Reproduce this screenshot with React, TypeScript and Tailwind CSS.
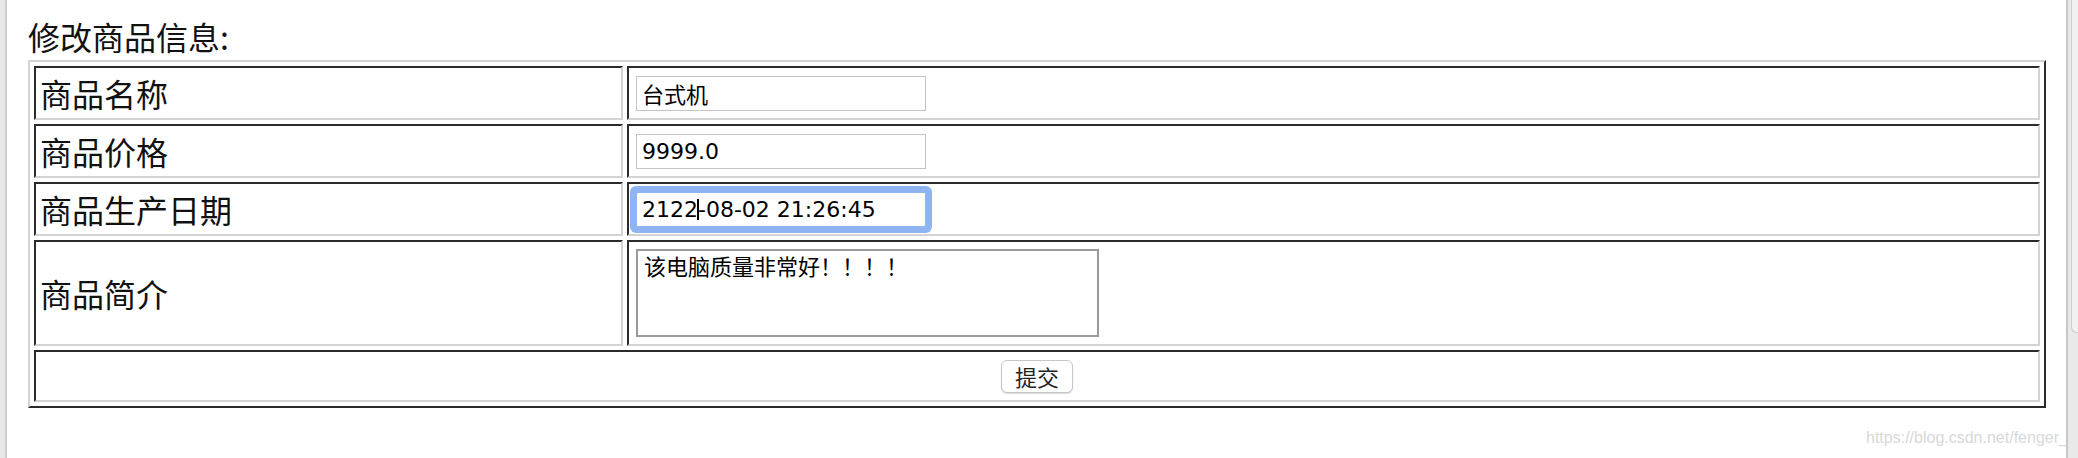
import React from "react";

const cjk = { fontFamily: '"Noto Sans CJK SC", "Noto Sans", sans-serif' };
const inputFont = { fontFamily: '"DejaVu Sans", "Noto Sans CJK SC", sans-serif' };

const cellCls =
  "border-2 border-t-[#2b2b2b] border-l-[#2b2b2b] border-r-[#d3d3d3] border-b-[#d3d3d3] flex items-center";

function Label({ text }: { text: string }) {
  return (
    <div className={cellCls + " pl-[4px]"}>
      <span className="text-[32px] leading-[32px] text-[#111]" style={cjk}>
        {text}
      </span>
    </div>
  );
}

export default function App() {
  return (
    <div className="relative w-[2078px] h-[458px] bg-white overflow-hidden flex">
      {/* left window edge */}
      <div className="flex h-full shrink-0">
        <div className="w-[5px] h-full bg-[#e8e8e8]" />
        <div className="w-[2px] h-full bg-[#cfcfcf]" />
      </div>

      {/* page content */}
      <div className="flex-1 pl-[21px]">
        <div className="h-[60px] pt-[20px]">
          <div className="text-[32px] leading-[32px] text-[#111]" style={cjk}>
            修改商品信息:
          </div>
        </div>

        <div className="w-[2018px] border-2 border-t-[#d3d3d3] border-l-[#d3d3d3] border-r-[#2b2b2b] border-b-[#2b2b2b] p-[4px] grid grid-cols-[589px_1413px] grid-rows-[54px_54px_54px_106px_52px] gap-[4px]">
          <Label text="商品名称" />
          <div className={cellCls + " pl-[7px]"}>
            <input
              defaultValue="台式机"
              className="w-[290px] h-[35px] border border-[#c4c4c4] px-[5px] text-[22px] text-black outline-none bg-white"
              style={inputFont}
            />
          </div>

          <Label text="商品价格" />
          <div className={cellCls + " pl-[7px]"}>
            <input
              defaultValue="9999.0"
              className="w-[290px] h-[35px] border border-[#c4c4c4] px-[5px] text-[22px] text-black outline-none bg-white"
              style={inputFont}
            />
          </div>

          <Label text="商品生产日期" />
          <div className={cellCls + " pl-[7px]"}>
            <div className="relative">
              <input
                defaultValue="2122-08-02 21:26:45"
                className="w-[290px] h-[35px] border border-[#8eb5f2] rounded-[2px] shadow-[0_0_0_6px_#8eb5f2] px-[5px] text-[22px] text-black outline-none bg-white"
                style={inputFont}
              />
              <div
                className="absolute inset-0 px-[6px] flex items-center pointer-events-none text-[22px]"
                style={inputFont}
              >
                <span className="invisible">2122</span>
                <span className="w-[2px] h-[21px] bg-black -ml-[1px]" />
              </div>
            </div>
          </div>

          <Label text="商品简介" />
          <div className={cellCls + " pl-[7px]"}>
            <textarea
              defaultValue="该电脑质量非常好！！！！"
              className="w-[463px] h-[88px] border-2 border-[#9a9a9a] px-[6px] py-[4px] text-[22px] leading-[26px] text-black resize-none outline-none bg-white"
              style={inputFont}
            />
          </div>

          <div className={cellCls + " col-span-2 justify-center"}>
            <button
              className="w-[72px] h-[33px] rounded-[6px] border border-[#c6c6c6] bg-white shadow-[0_1px_1px_rgba(0,0,0,0.15)] text-[22px] leading-[26px] text-[#222]"
              style={cjk}
            >
              提交
            </button>
          </div>
        </div>
      </div>

      {/* watermark */}
      <div
        className="absolute left-[1866px] top-[428px] text-[16px] leading-[20px] text-[#d8d8d8] whitespace-nowrap"
        style={{ fontFamily: '"Liberation Sans", Arial, sans-serif' }}
      >
        https://blog.csdn.net/fenger_c
      </div>

      {/* right scrollbar */}
      <div className="relative z-10 w-[12px] h-full shrink-0 border-l-2 border-[#c9c9c4] bg-[#e9e9e9]">
        <div className="ml-[3px] h-[333px] border-l border-b border-[#d0d0d0] rounded-bl-[6px] bg-[#f1f1f1]" />
      </div>
    </div>
  );
}
